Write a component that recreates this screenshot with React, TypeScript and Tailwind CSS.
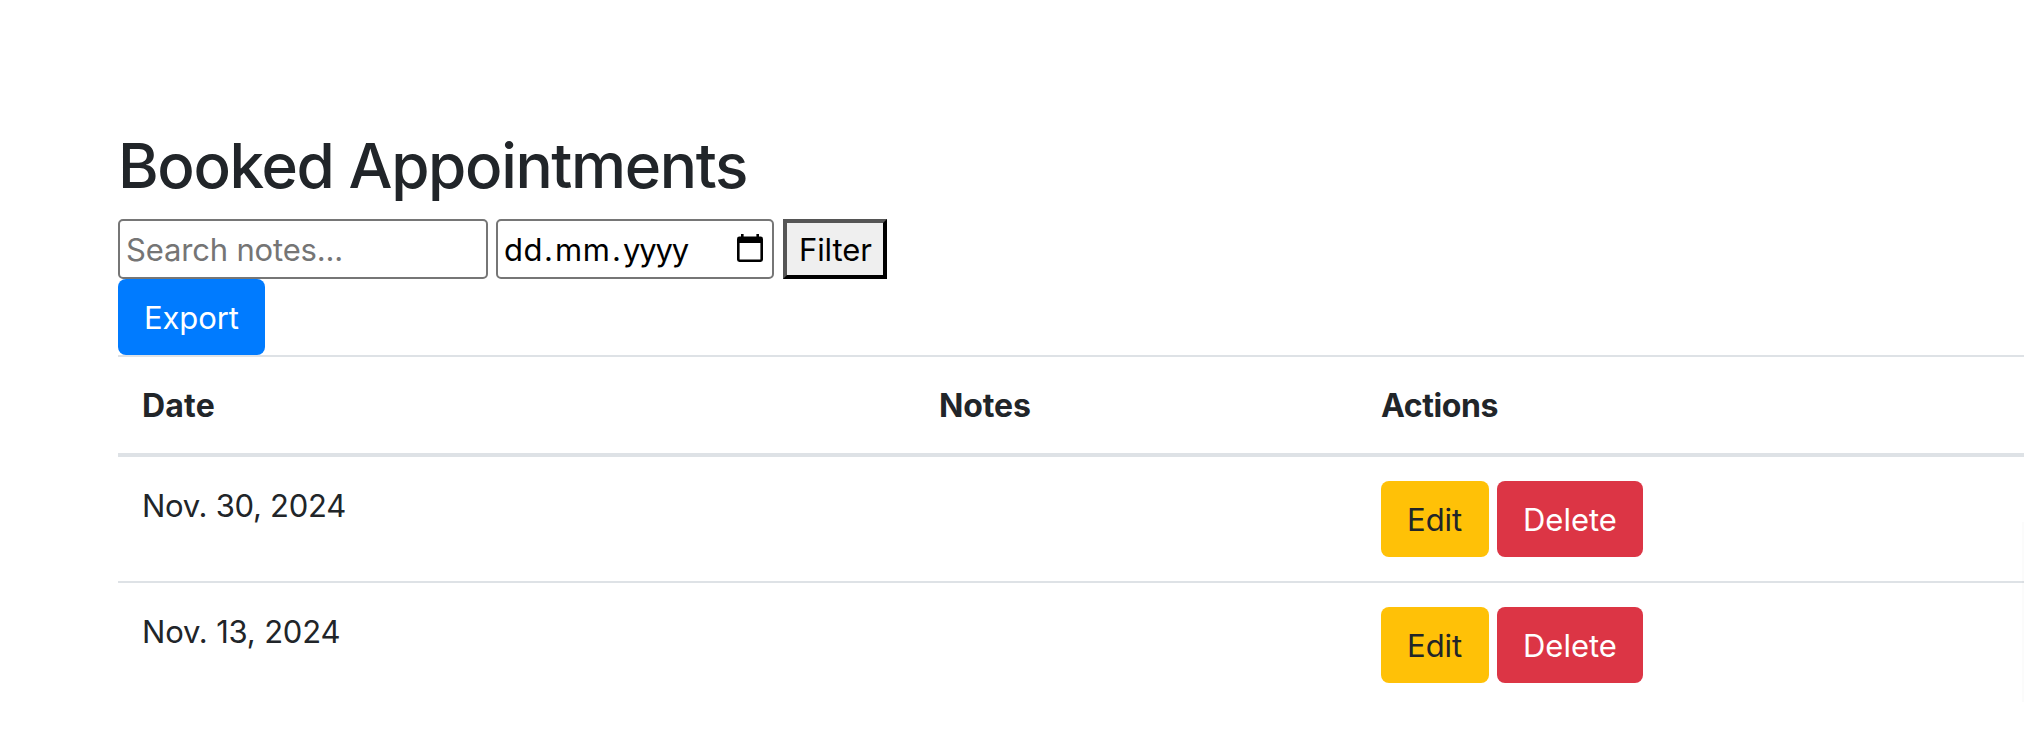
import React from "react";

type Appointment = { id: number; date: string; dateClass: string; notes: string };

const appointments: Appointment[] = [
  { id: 1, date: "Nov. 30, 2024", dateClass: "tracking-[-0.28px]", notes: "" },
  { id: 2, date: "Nov. 13, 2024", dateClass: "tracking-[-0.18px]", notes: "" },
];

function CalendarIcon() {
  return (
    <svg width="26" height="28" viewBox="0 0 26 28" fill="currentColor" aria-hidden="true">
      <path
        fillRule="evenodd"
        d="M4 0h2.600v2.600h12.800V0h2.600v2.600h1.600A2.400 2.400 0 0 1 26 5v20.600a2.400 2.400 0 0 1-2.400 2.400H2.400A2.400 2.400 0 0 1 0 25.600V5a2.400 2.400 0 0 1 2.400-2.400H4zM2.600 9v16.600h20.800V9z"
      />
    </svg>
  );
}

function FilterForm() {
  return (
    <form className="flex h-[60px]" onSubmit={(e) => e.preventDefault()}>
      <input
        type="text"
        placeholder="Search notes..."
        className="h-[60px] w-[370px] rounded-[5px] border-2 border-[#767676] bg-white px-[6px] py-[4px] tracking-[-0.17px] outline-none placeholder:text-[#757575]"
      />
      <div className="ml-2 flex h-[60px] w-[278px] items-start rounded-[5px] border-2 border-[#767676] bg-white pl-[6px] pt-[5px] text-black">
        <span className="w-[40px] tracking-[0.5px]">dd</span>
        <span className="w-[11px]">.</span>
        <span className="w-[57px] tracking-[0.5px]">mm</span>
        <span className="w-[11px]">.</span>
        <span className="w-[114px] tracking-[-1.2px]">yyyy</span>
        <span className="pt-[8px]">
          <CalendarIcon />
        </span>
      </div>
      <button
        type="submit"
        className="ml-[9px] h-[60px] w-[104px] border-4 border-b-black border-l-[#555555] border-r-black border-t-[#555555] bg-[#efefef] pb-[1px] pl-[12px] pt-[3px] text-left tracking-[-0.1px] text-black"
      >
        Filter
      </button>
    </form>
  );
}

const headCell = "h-[102px] border-b-4 border-t-2 border-[#dee2e6] px-6 pb-[23px] pt-[25px] text-left align-top text-[32px] font-bold leading-[48px]";
const bodyCell = "px-6 pb-[23px] pt-[25px] align-top";

export default function App() {
  return (
    <main className="relative h-[754px] overflow-hidden bg-white pl-[118px] pt-[127px] font-['Inter',sans-serif] text-[31px] leading-[48px] text-[#212529]">
      <h2 className="h-[92px] text-[62px] font-medium leading-[77px] tracking-[-1.37px]">Booked Appointments</h2>
      <FilterForm />
      <a href="#export" className="block h-[76px] w-[147px] rounded-lg bg-[#007bff] px-[26px] py-[15px] tracking-[-0.1px] text-white">
        Export
      </a>
      <table className="w-full table-fixed border-separate border-spacing-0">
        <colgroup>
          <col className="w-[797px]" />
          <col className="w-[442px]" />
          <col />
        </colgroup>
        <thead>
          <tr>
            <th className={`${headCell} tracking-[0.2px]`}>Date</th>
            <th className={`${headCell} tracking-[-0.12px]`}>Notes</th>
            <th className={`${headCell} tracking-[-0.4px]`}>Actions</th>
          </tr>
        </thead>
        <tbody className="[&>tr+tr>td]:border-t-2 [&>tr+tr>td]:border-[#dee2e6]">
          {appointments.map((item) => (
            <tr key={item.id}>
              <td className={`${bodyCell} ${item.dateClass}`}>{item.date}</td>
              <td className={bodyCell}>{item.notes}</td>
              <td className="p-6 align-top">
                <div className="flex gap-2">
                  <a href="#edit" className="h-[76px] w-[108px] rounded-lg bg-[#ffc107] px-[26px] pt-[15px]">
                    Edit
                  </a>
                  <a href="#delete" className="h-[76px] w-[146px] rounded-lg bg-[#dc3545] px-[26px] pt-[15px] text-white">
                    Delete
                  </a>
                </div>
              </td>
            </tr>
          ))}
        </tbody>
      </table>
      <div className="absolute right-0 top-[522px] h-[180px] w-[2px] bg-black/[0.015]" />
    </main>
  );
}
